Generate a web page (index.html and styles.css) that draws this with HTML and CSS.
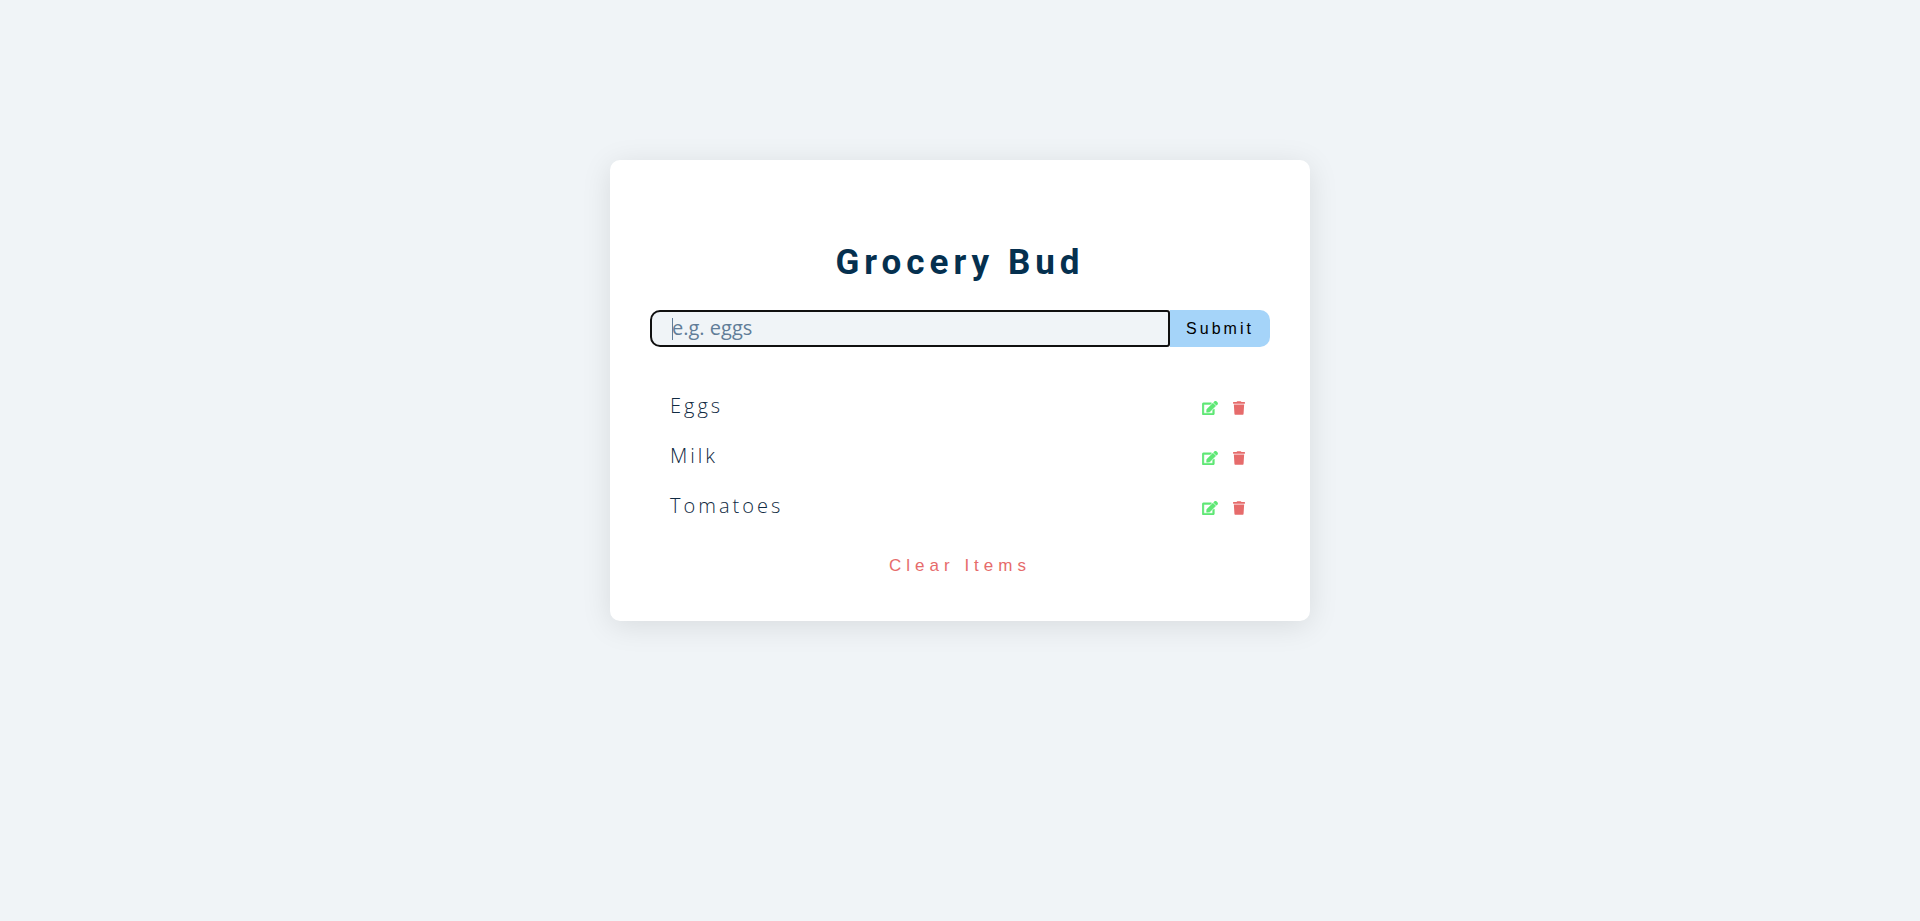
FILE: index.html
```html
<!DOCTYPE html>
<html lang="en">
<head>
<meta charset="utf-8">
<meta name="viewport" content="width=device-width, initial-scale=1">
<title>Grocery Bud</title>
<link rel="stylesheet" href="styles.css">
</head>
<body>
<svg class="sprite" aria-hidden="true">
  <symbol id="edit" viewBox="0 0 576 512"><path d="M402.6 83.2l90.2 90.2c3.8 3.8 3.8 10 0 13.8L274.4 405.6l-92.8 10.3c-12.4 1.4-22.9-9.1-21.5-21.5l10.3-92.8L388.8 83.2c3.8-3.8 10-3.8 13.8 0zm162-22.9l-48.8-48.8c-15.2-15.2-39.9-15.2-55.2 0l-35.4 35.4c-3.8 3.8-3.8 10 0 13.8l90.2 90.2c3.8 3.8 10 3.8 13.8 0l35.4-35.4c15.2-15.3 15.2-40 0-55.2zM384 346.2V448H64V128h229.8c3.2 0 6.2-1.3 8.5-3.5l40-40c7.6-7.6 2.2-20.5-8.5-20.5H48C21.5 64 0 85.5 0 112v352c0 26.5 21.5 48 48 48h352c26.5 0 48-21.5 48-48V306.200c0-10.700-12.900-16-20.500-8.500l-40 40c-2.200 2.300-3.500 5.300-3.500 8.500z"/></symbol>
  <symbol id="trash" viewBox="0 0 448 512"><path d="M432 32H312l-9.400-18.700A24 24 0 0 0 281.100 0H166.800a23.700 23.700 0 0 0-21.400 13.300L136 32H16A16 16 0 0 0 0 48v32a16 16 0 0 0 16 16h416a16 16 0 0 0 16-16V48a16 16 0 0 0-16-16zM53.200 467a48 48 0 0 0 47.900 45h245.800a48 48 0 0 0 47.900-45L416 128H32z"/></symbol>
</svg>
<main class="card">
  <form class="form">
    <h3 class="title">Grocery Bud</h3>
    <div class="control">
      <input class="entry" type="text" placeholder="e.g. eggs" aria-label="Grocery item">
      <button class="submit" type="submit">Submit</button>
    </div>
  </form>
  <section class="container">
    <ul class="list">
      <li class="item"><p class="name">Eggs</p><div class="actions"><button class="icon edit" type="button" aria-label="Edit Eggs"><svg class="edit-glyph"><use href="#edit"/></svg></button><button class="icon delete" type="button" aria-label="Delete Eggs"><svg class="trash-glyph"><use href="#trash"/></svg></button></div></li>
      <li class="item"><p class="name">Milk</p><div class="actions"><button class="icon edit" type="button" aria-label="Edit Milk"><svg class="edit-glyph"><use href="#edit"/></svg></button><button class="icon delete" type="button" aria-label="Delete Milk"><svg class="trash-glyph"><use href="#trash"/></svg></button></div></li>
      <li class="item"><p class="name">Tomatoes</p><div class="actions"><button class="icon edit" type="button" aria-label="Edit Tomatoes"><svg class="edit-glyph"><use href="#edit"/></svg></button><button class="icon delete" type="button" aria-label="Delete Tomatoes"><svg class="trash-glyph"><use href="#trash"/></svg></button></div></li>
    </ul>
    <button class="clear" type="button">Clear Items</button>
  </section>
</main>
</body>
</html>
```
FILE: styles.css
```css
* { box-sizing: border-box; margin: 0; padding: 0; }
body {
  background: #f0f4f7;
  color: #102a42;
  font-family: "Open Sans", sans-serif;
  font-size: 20px;
  line-height: 30px;
}
.sprite { display: none; }
.card {
  width: 90vw;
  max-width: 700px;
  margin: 160px auto;
  padding: 40px;
  background: #fff;
  border-radius: 10px;
  box-shadow: 0 5px 30px rgba(0, 0, 0, 0.1);
}
.title {
  margin: 43px 0 27px;
  color: #05304f;
  font: 700 35px/40px Roboto, sans-serif;
  letter-spacing: 5px;
  text-align: center;
}
.control { display: flex; }
.entry {
  flex: 1 0 0;
  min-width: 0;
  height: 37px;
  padding: 0 20px 2px;
  border: 2px solid #101010;
  border-radius: 10px 3px 3px 10px;
  outline: none;
  /* text caret */
  background: linear-gradient(#617d98, #617d98) 20px 6px / 1px 22px no-repeat #f0f4f7;
  color: #617d98;
  font: 400 20px/28px "Open Sans", sans-serif;
}
.entry::placeholder { color: #617d98; opacity: 1; }
.submit {
  flex: 0 0 100px;
  border: 0;
  border-radius: 0 10px 10px 0;
  background: #a5d4f9;
  color: #000;
  font: 400 16px/20px "Liberation Sans", Arial, sans-serif;
  letter-spacing: 3px;
}
.container { margin-top: 39px; }
.list { list-style: none; }
.item {
  display: flex;
  align-items: center;
  justify-content: space-between;
  margin-bottom: 10px;
  padding: 5px 20px;
}
.name { font-weight: 300; letter-spacing: 3px; }
.actions { display: flex; gap: 15px; padding: 4px 5px 0 0; }
.icon { display: flex; border: 0; background: transparent; }
.edit { color: #5fe875; }
.delete { color: #e66b6b; }
.edit-glyph { width: 16px; height: 14px; fill: currentColor; stroke: currentColor; stroke-width: 16px; overflow: visible; }
.trash-glyph { width: 12px; height: 14px; fill: currentColor; }
.clear {
  display: block;
  margin: 30px auto 5px;
  border: 0;
  background: transparent;
  color: #e66b6b;
  font: 400 17px/20px "Liberation Sans", Arial, sans-serif;
  letter-spacing: 5px;
}
```
